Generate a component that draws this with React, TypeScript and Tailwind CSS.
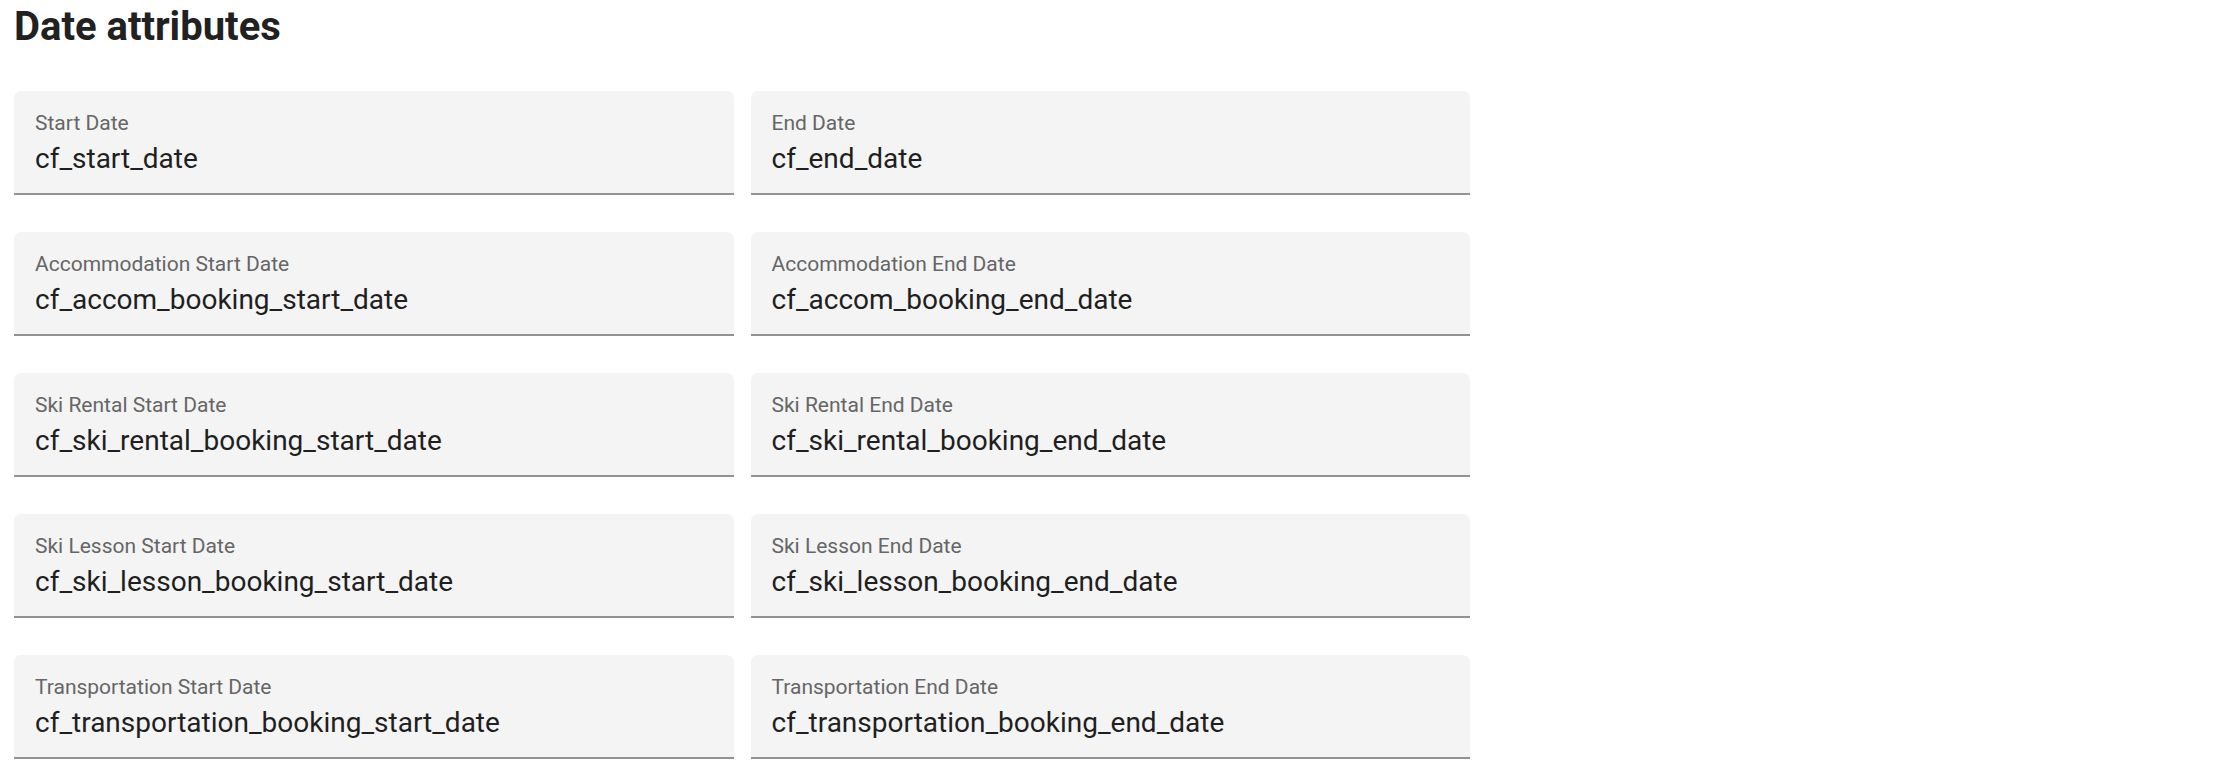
const fields: { label: string; value: string }[] = [
  { label: "Start Date", value: "cf_start_date" },
  { label: "End Date", value: "cf_end_date" },
  { label: "Accommodation Start Date", value: "cf_accom_booking_start_date" },
  { label: "Accommodation End Date", value: "cf_accom_booking_end_date" },
  { label: "Ski Rental Start Date", value: "cf_ski_rental_booking_start_date" },
  { label: "Ski Rental End Date", value: "cf_ski_rental_booking_end_date" },
  { label: "Ski Lesson Start Date", value: "cf_ski_lesson_booking_start_date" },
  { label: "Ski Lesson End Date", value: "cf_ski_lesson_booking_end_date" },
  { label: "Transportation Start Date", value: "cf_transportation_booking_start_date" },
  { label: "Transportation End Date", value: "cf_transportation_booking_end_date" },
];

function FilledField({ label, value }: { label: string; value: string }) {
  return (
    <div className="h-[104px] box-border rounded-t-[7px] bg-[#f4f4f4] border-b-2 border-[#929292] px-[21px] pt-[20px]">
      <div className="text-[21px] leading-[24px] text-[#666666]">{label}</div>
      <div className="mt-[8px] text-[28px] leading-[32px] text-[#1f1f1f]">{value}</div>
    </div>
  );
}

export default function App() {
  return (
    <div className="min-h-[780px] bg-white font-['Roboto',_'Liberation_Sans',_sans-serif] pl-[14px]">
      <h1 className="pt-[7px] text-[40px] leading-[40px] font-bold text-[#212121]">
        Date attributes
      </h1>
      <div className="mt-[44px] grid w-[1456px] grid-cols-2 gap-x-[17px] gap-y-[37px]">
        {fields.map((f) => (
          <FilledField key={f.value} label={f.label} value={f.value} />
        ))}
      </div>
    </div>
  );
}
